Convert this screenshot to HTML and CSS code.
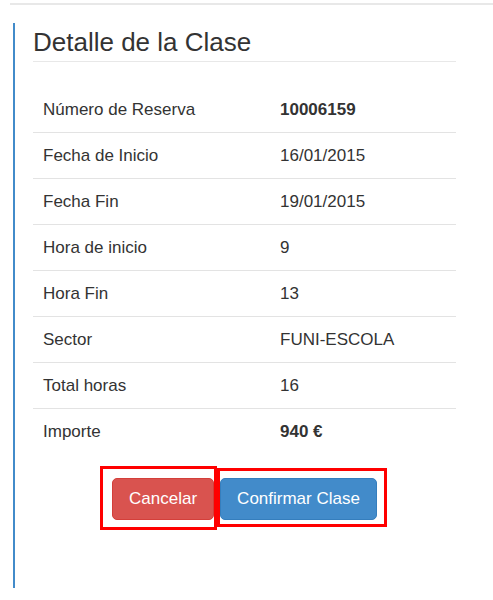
FILE: index.html
```html
<!DOCTYPE html>
<html lang="es">
<head>
  <meta charset="UTF-8" />
  <meta name="viewport" content="width=device-width, initial-scale=1.0" />
  <title>Detalle de la Clase</title>
  <link rel="stylesheet" href="styles.css">
</head>
<body>
  <div class="top-rule"></div>
  <div class="callout">
    <h3>Detalle de la Clase</h3>
    <table>
      <tbody>
        <tr><td>Número de Reserva</td><td><strong>10006159</strong></td></tr>
        <tr><td>Fecha de Inicio</td><td>16/01/2015</td></tr>
        <tr><td>Fecha Fin</td><td>19/01/2015</td></tr>
        <tr><td>Hora de inicio</td><td>9</td></tr>
        <tr><td>Hora Fin</td><td>13</td></tr>
        <tr><td>Sector</td><td>FUNI-ESCOLA</td></tr>
        <tr><td>Total horas</td><td>16</td></tr>
        <tr><td>Importe</td><td><strong>940 €</strong></td></tr>
      </tbody>
    </table>
    <div class="actions">
      <button class="btn btn-danger">Cancelar</button>
      <button class="btn btn-primary">Confirmar Clase</button>
      <span class="mark mark-cancel"></span>
      <span class="mark mark-confirm"></span>
    </div>
  </div>
</body>
</html>
```

FILE: styles.css
```css
body {
  margin: 0;
  background-color: #fff;
  font-family: "Liberation Sans", Arial, sans-serif;
  color: #333;
}

.top-rule {
  margin: 3px 0 0 10px;
  border-top: 2px solid #e8e8e8;
}

.callout {
  margin: 18px 0 0 13px;
  width: 423px;
  padding: 5px 0 68px 18px;
  border-left: 2px solid #428bca;
}

h3 {
  margin: 0;
  padding-bottom: 4px;
  font-size: 26px;
  font-weight: normal;
  line-height: 1.1;
  border-bottom: 1px solid #e8e8e8;
}

table {
  width: 100%;
  margin-top: 24px;
  border-collapse: collapse;
  font-size: 17px;
}

td {
  padding: 10px;
  line-height: 25px;
  border-top: 1px solid #e3e3e3;
  text-align: left;
}

tr:first-child td {
  border-top-color: transparent;
}

td:first-child {
  width: 217px;
}

.actions {
  position: relative;
  display: flex;
  justify-content: center;
  gap: 6px;
  margin-top: 24px;
}

.btn {
  padding: 8px 16px;
  font-family: inherit;
  font-size: 17px;
  line-height: 24px;
  color: #fff;
  border: 1px solid transparent;
  border-radius: 5px;
  cursor: pointer;
}

.btn-danger {
  background-color: #d9534f;
  border-color: #d43f3a;
}

.btn-primary {
  background-color: #428bca;
  border-color: #357ebd;
}

.mark {
  position: absolute;
  box-sizing: border-box;
  border: 3px solid #ff0000;
}

.mark-cancel {
  left: 67px;
  top: -12px;
  width: 117px;
  height: 64px;
}

.mark-confirm {
  left: 184px;
  top: -10px;
  width: 170px;
  height: 59px;
}
```
